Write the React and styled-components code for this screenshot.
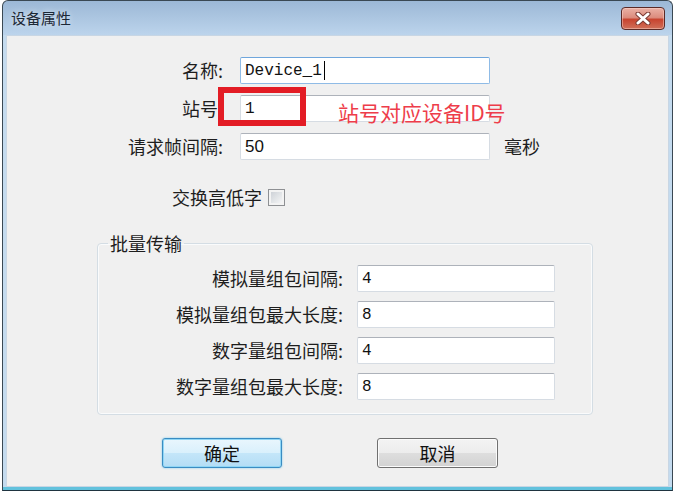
import React from "react";
import styled, { createGlobalStyle } from "styled-components";

const GlobalStyle = createGlobalStyle`
  html, body {
    margin: 0;
    background: #ffffff;
  }
  body {
    font-family: "Noto Sans CJK SC", "Noto Sans", sans-serif;
  }
`;

const Window = styled.div`
  box-sizing: border-box;
  width: 671px;
  height: 491px;
  margin-left: 2px;
  border: 1px solid #3a4853;
  border-bottom-color: #1f3440;
  border-radius: 6px 6px 0 0;
  padding: 0 3px 3px;
  display: flex;
  flex-direction: column;
  background: linear-gradient(
    to bottom,
    #9cb8d6 0,
    #bcd4ec 34px,
    #c4dbef 34px,
    #c4dbef calc(100% - 3px),
    #62c2dd calc(100% - 3px)
  );
`;

const TitleBar = styled.div`
  height: 34px;
  display: flex;
  align-items: center;
  justify-content: space-between;
  padding-left: 5px;
`;

const Title = styled.div`
  font-size: 15px;
  line-height: 20px;
  color: #1c2836;
  text-shadow: 0 0 6px rgba(255, 255, 255, 0.7);
`;

const CloseButton = styled.div`
  align-self: flex-start;
  margin-top: 6px;
  margin-right: 4px;
  width: 44px;
  height: 23px;
  box-sizing: border-box;
  border: 1px solid #5b2a26;
  border-radius: 4px;
  display: flex;
  align-items: center;
  justify-content: center;
  background: linear-gradient(
    to bottom,
    #eab1a5 0%,
    #dc8d7e 45%,
    #c8442f 55%,
    #d0705a 100%
  );
  box-shadow: inset 0 0 0 1px rgba(255, 220, 210, 0.45);
`;

const Body = styled.div`
  flex: 1;
  background: #f0f0f0;
  box-shadow: inset 0 0 0 1px #c8d6e4;
  padding-top: 22px;
  display: flex;
  flex-direction: column;
`;

const Form = styled.div`
  position: relative;
  display: grid;
  grid-template-columns: 234px 250px auto;
  grid-auto-rows: 27px;
  row-gap: 11px;
`;

const Label = styled.div`
  box-sizing: border-box;
  padding-right: ${(p) => p.$gap}px;
  text-align: right;
  font-size: 18px;
  line-height: 27px;
  color: #1e1e1e;
  white-space: nowrap;
`;

const TextBox = styled.div`
  box-sizing: border-box;
  height: 27px;
  background: #ffffff;
  border: 1px solid ${(p) => (p.$focused ? "#8fbbe6" : "#d6dce3")};
  border-top-color: ${(p) => (p.$focused ? "#6fa6dc" : "#adb2ba")};
  border-radius: 2px;
  padding-left: 4px;
  display: flex;
  align-items: center;
  font-family: ${(p) =>
    p.$sans ? '"Liberation Sans", Arial, sans-serif' : '"Liberation Mono", monospace'};
  font-size: ${(p) => (p.$sans ? 17 : 16)}px;
  color: #111;
`;

const Caret = styled.span`
  display: inline-block;
  width: 1px;
  height: 19px;
  margin-left: 2px;
  background: #000;
`;

const Unit = styled.div`
  padding-left: 14px;
  font-size: 18px;
  line-height: 27px;
  color: #1e1e1e;
`;

const RedBox = styled.div`
  position: absolute;
  left: 212px;
  top: 30px;
  width: 88px;
  height: 39px;
  box-sizing: border-box;
  border: 6px solid #e31c25;
`;

const Annotation = styled.div`
  position: absolute;
  left: 332px;
  top: 43px;
  font-size: 21px;
  line-height: 24px;
  color: #ee3d4a;
  white-space: nowrap;
`;

const CheckRow = styled.div`
  margin-top: 27px;
  padding-left: 166px;
  height: 20px;
  display: flex;
  align-items: center;
  gap: 6px;
  font-size: 18px;
  color: #1e1e1e;
`;

const CheckBox = styled.div`
  width: 17px;
  height: 17px;
  box-sizing: border-box;
  border: 1px solid #8e9093;
  background: linear-gradient(135deg, #c7ccd2, #fbfbfb);
  box-shadow: inset 0 0 0 2px #f3f3f3;
`;

const Group = styled.fieldset`
  box-sizing: border-box;
  margin: 25px 0 0 91px;
  width: 496px;
  min-width: 0;
  padding: 11px 0 14px;
  border: 1px solid #d4dde4;
  border-radius: 4px;
  box-shadow: inset 0 0 0 1px #fafbfc;
`;

const Legend = styled.legend`
  margin-left: 10px;
  padding: 0 2px;
  font-size: 18px;
  line-height: 22px;
  color: #1e1e1e;
`;

const GroupGrid = styled.div`
  display: grid;
  grid-template-columns: 259px 198px;
  grid-auto-rows: 27px;
  row-gap: 9px;
`;

const ButtonRow = styled.div`
  margin-top: 23px;
  padding-left: 156px;
  display: flex;
  gap: 95px;
`;

const Button = styled.div`
  box-sizing: border-box;
  width: ${(p) => (p.$primary ? 120 : 121)}px;
  height: 30px;
  border-radius: 3px;
  display: flex;
  align-items: center;
  justify-content: center;
  font-size: 18px;
  color: #111;
  border: 1px solid ${(p) => (p.$primary ? "#3a8cc2" : "#707070")};
  background: ${(p) =>
    p.$primary
      ? "linear-gradient(to bottom, #e9f6fd, #d9f0fc 50%, #c4e6f9 50%, #b3ddf5)"
      : "linear-gradient(to bottom, #f3f3f3, #ececec 50%, #dedede 50%, #d2d2d2)"};
  box-shadow: ${(p) =>
    p.$primary
      ? "inset 0 0 0 1px #8fd6f5, 0 0 2px #6cc4ea"
      : "inset 0 0 0 1px #fbfbfb"};
`;

const CloseIcon = () => (
  <svg width="16" height="13" viewBox="0 0 16 13">
    <path d="M3 2 L13 11 M13 2 L3 11" stroke="#7a3a33" strokeWidth="5" strokeLinecap="round" />
    <path d="M3 2 L13 11 M13 2 L3 11" stroke="#ffffff" strokeWidth="3" strokeLinecap="round" />
  </svg>
);

const groupRows = [
  { label: "模拟量组包间隔:", value: "4" },
  { label: "模拟量组包最大长度:", value: "8" },
  { label: "数字量组包间隔:", value: "4" },
  { label: "数字量组包最大长度:", value: "8" },
];

export default function App() {
  return (
    <>
      <GlobalStyle />
      <Window>
        <TitleBar>
          <Title>设备属性</Title>
          <CloseButton>
            <CloseIcon />
          </CloseButton>
        </TitleBar>
        <Body>
          <Form>
            <Label $gap={17}>名称:</Label>
            <TextBox $focused>
              Device_1
              <Caret />
            </TextBox>
            <div />
            <Label $gap={17}>站号:</Label>
            <TextBox>1</TextBox>
            <div />
            <Label $gap={17}>请求帧间隔:</Label>
            <TextBox $sans>50</TextBox>
            <Unit>毫秒</Unit>
            <RedBox />
            <Annotation>站号对应设备ID号</Annotation>
          </Form>
          <CheckRow>
            交换高低字
            <CheckBox />
          </CheckRow>
          <Group>
            <Legend>批量传输</Legend>
            <GroupGrid>
              {groupRows.map((row, i) => (
                <React.Fragment key={i}>
                  <Label $gap={14}>{row.label}</Label>
                  <TextBox>{row.value}</TextBox>
                </React.Fragment>
              ))}
            </GroupGrid>
          </Group>
          <ButtonRow>
            <Button $primary>确定</Button>
            <Button>取消</Button>
          </ButtonRow>
        </Body>
      </Window>
    </>
  );
}
